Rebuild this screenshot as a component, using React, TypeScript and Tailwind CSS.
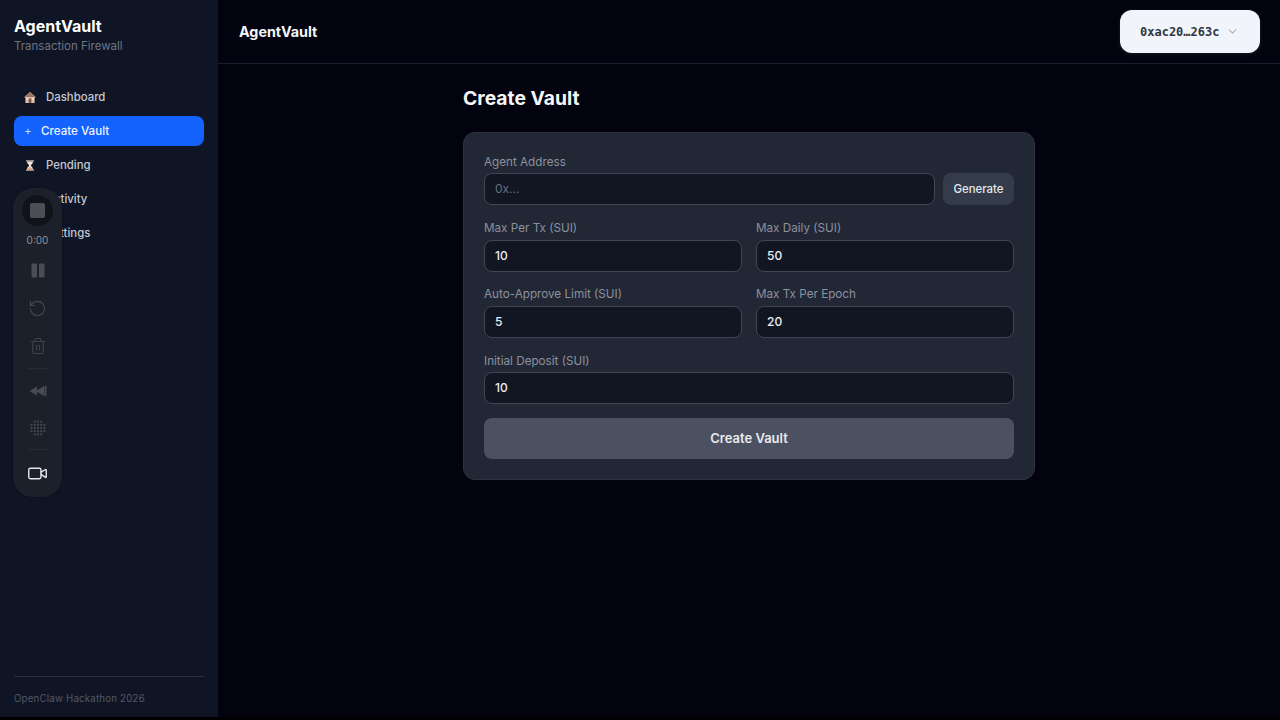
import React from 'react';
import { ChevronDown, Plus, RotateCcw, Trash2, Video } from 'lucide-react';

const HouseIcon = () => (
  <svg width="13" height="13" viewBox="0 0 12 12">
    <path d="M6 .6 11.6 5.6 10.6 6.4V11.4H1.4V6.4L.4 5.6Z" fill="#dcbfa8" />
    <path d="M6 .6 11.6 5.6H.4Z" fill="#9a7464" />
    <rect x="4.6" y="7" width="2.8" height="4.4" fill="#7d5648" />
    <rect x="2.3" y="6.6" width="1.5" height="1.5" fill="#f4efe9" />
    <rect x="8.2" y="6.6" width="1.5" height="1.5" fill="#f4efe9" />
  </svg>
);

const HourglassIcon = () => (
  <svg width="12" height="13" viewBox="0 0 12 12">
    <rect x="2" y=".6" width="8" height="1.5" fill="#a8998f" />
    <rect x="2" y="9.9" width="8" height="1.5" fill="#a8998f" />
    <path d="M3 2.1H9C9 4.4 7.2 5 6.8 6 7.2 7 9 7.6 9 9.9H3C3 7.6 4.8 7 5.2 6 4.8 5 3 4.4 3 2.1Z" fill="#ece6df" />
    <path d="M3.9 9.9C4.2 8.6 5.4 8 6 7.6 6.6 8 7.8 8.6 8.1 9.9Z" fill="#d9a273" />
  </svg>
);

const PauseBars = () => (
  <svg width="14" height="15" viewBox="0 0 14 15" fill="#4a4d55" className="mt-[17px]">
    <rect x="0.5" y="0.5" width="5.5" height="14" rx="1" />
    <rect x="8" y="0.5" width="5.5" height="14" rx="1" />
  </svg>
);

const RewindGlyph = () => (
  <svg width="18" height="12" viewBox="0 0 18 12" fill="#484b53" className="mt-[16px]">
    <path d="M0.5 6 8 1.5V10.5Z" />
    <path d="M7 6 15 1V11Z" />
    <rect x="15.5" y="1" width="2" height="10" />
  </svg>
);

const DotGrid = () => {
  const dots = [0, 1, 2, 3, 4];
  return (
    <svg width="16" height="16" viewBox="0 0 16 16" fill="#43464e" className="mt-[23px]">
      {dots.map((r) =>
        dots.map((c) =>
          (r === 0 || r === 4) && (c === 0 || c === 4) ? null : (
            <circle key={`${r}-${c}`} cx={1.6 + c * 3.2} cy={1.6 + r * 3.2} r="1.15" />
          )
        )
      )}
    </svg>
  );
};

const NavItem = ({ icon, label, active }: { icon: React.ReactNode; label: string; active?: boolean }) => (
  <div
    className={
      active
        ? 'flex h-[30px] items-center rounded-lg bg-[#1463ff] pl-[10px] text-[11.6px] font-medium text-[#eef2ff]'
        : 'flex h-[30px] items-center rounded-lg pl-[10px] text-[11.4px] font-medium text-[#c3c8d2]'
    }
  >
    <span className={active ? 'mr-[9px] flex w-[8px] justify-center' : 'mr-[10px] flex w-[12px] justify-center'}>{icon}</span>
    <span className="mt-[1px]">{label}</span>
  </div>
);

const Field = ({ label, value, low }: { label: string; value: string; low?: boolean }) => (
  <div>
    <div className={low ? 'mb-[3px] h-[18px] text-[11.7px] leading-[20px] text-[#8c919d]' : 'mb-[3px] h-[18px] text-[11.7px] leading-[18px] text-[#8c919d]'}>{label}</div>
    <div className="flex h-[32px] items-center rounded-lg border border-[#3f4554] bg-[#121623] px-[10px] text-[12px] font-medium text-[#eceef2]">
      {value}
    </div>
  </div>
);

const Recorder = () => (
  <div className="absolute left-[13px] top-[188px] flex h-[309px] w-[49px] flex-col items-center rounded-[20px] bg-[#1c202b] shadow-[0_0_3px_rgba(0,0,0,0.3)]">
    <div className="mt-[7px] flex h-[31px] w-[31px] items-center justify-center rounded-full bg-[#11131a]">
      <div className="h-[15px] w-[15px] rounded-[2px] bg-[#4b4e55]" />
    </div>
    <div className="mt-[8px] text-[10px] leading-[12px] text-[#8e9096]">0:00</div>
    <PauseBars />
    <RotateCcw size={19} className="mt-[21px] text-[#43464e]" strokeWidth={1.5} />
    <Trash2 size={18} className="mt-[19px] text-[#3f4249]" strokeWidth={1.5} />
    <div className="mt-[13px] h-px w-[20px] bg-[#292c35]" />
    <RewindGlyph />
    <DotGrid />
    <div className="mt-[13px] h-px w-[20px] bg-[#292c35]" />
    <Video size={21} className="mt-[13px] text-[#e6e7ea]" strokeWidth={1.6} />
  </div>
);

export default function App() {
  return (
    <div className="relative flex h-[720px] w-[1280px] overflow-hidden bg-[#02030e] font-['Inter',sans-serif]">
      <aside className="flex h-[717px] w-[218px] shrink-0 flex-col bg-[#0f1524] px-[14px]">
        <div className="mt-[16px] text-[16px] font-bold leading-[20px] text-white">AgentVault</div>
        <div className="mt-[2px] text-[11.5px] leading-[16px] text-[#6e7483]">Transaction Firewall</div>
        <nav className="mt-[28px] flex w-[190px] flex-col gap-[4px]">
          <NavItem icon={<HouseIcon />} label="Dashboard" />
          <NavItem icon={<Plus size={11} strokeWidth={2.5} />} label="Create Vault" active />
          <NavItem icon={<HourglassIcon />} label="Pending" />
          <NavItem icon={<HourglassIcon />} label="Activity" />
          <NavItem icon={<HouseIcon />} label="Settings" />
        </nav>
        <div className="mt-auto mb-[11px] w-[190px] border-t border-[#2a2f3d] pt-[15px] text-[9.7px] leading-[14px] tracking-[0.2px] text-[#535968]">
          OpenClaw Hackathon 2026
        </div>
      </aside>

      <main className="flex min-w-0 flex-1 flex-col">
        <header className="flex h-[64px] shrink-0 items-center justify-between border-b border-[#1a1e2b] pl-[21px] pr-[20px]">
          <div className="mt-[1px] text-[14.3px] font-bold text-[#f5f6f8]">AgentVault</div>
          <div className="flex h-[43px] w-[140px] items-center rounded-xl bg-[#f2f4fb] pl-[20px] font-['DejaVu_Sans_Mono',monospace] text-[12px] font-bold text-[#33353d] shadow-[0_1px_4px_rgba(255,255,255,0.1)]">
            0xac20…263c
            <ChevronDown size={13} className="ml-[7px] text-[#b0b3bc]" />
          </div>
        </header>

        <div className="mx-auto w-[572px]">
          <h1 className="mt-[22px] text-[19.3px] font-bold leading-[24px] text-[#f5f6f8]">Create Vault</h1>
          <div className="mt-[22px] flex flex-col gap-[13px] rounded-xl border border-[#2e3342] bg-[#222736] px-[20px] pb-[20px] pt-[19px]">
            <div className="mb-[1px]">
              <div className="mb-[3px] h-[18px] text-[11.7px] leading-[20px] text-[#8c919d]">Agent Address</div>
              <div className="flex gap-[8px]">
                <div className="flex h-[32px] flex-1 items-center rounded-lg border border-[#3f4554] bg-[#121623] px-[10px] text-[12px] text-[#686d7a]">
                  0x...
                </div>
                <button className="h-[32px] w-[71px] rounded-lg bg-[#343b4b] pt-[2px] text-[11.4px] font-medium text-[#e6e8ee]">Generate</button>
              </div>
            </div>
            <div className="grid grid-cols-2 gap-x-[14px] gap-y-[13px]">
              <Field label="Max Per Tx (SUI)" value="10" />
              <Field label="Max Daily (SUI)" value="50" />
              <Field label="Auto-Approve Limit (SUI)" value="5" />
              <Field label="Max Tx Per Epoch" value="20" />
            </div>
            <Field label="Initial Deposit (SUI)" value="10" low />
            <button className="mt-[1px] h-[41px] rounded-lg bg-[#4c5161] text-[13px] font-semibold text-[#e8eaef]">Create Vault</button>
          </div>
        </div>
      </main>

      <Recorder />
      <div className="absolute bottom-0 left-0 h-[3px] w-full bg-black" />
    </div>
  );
}
